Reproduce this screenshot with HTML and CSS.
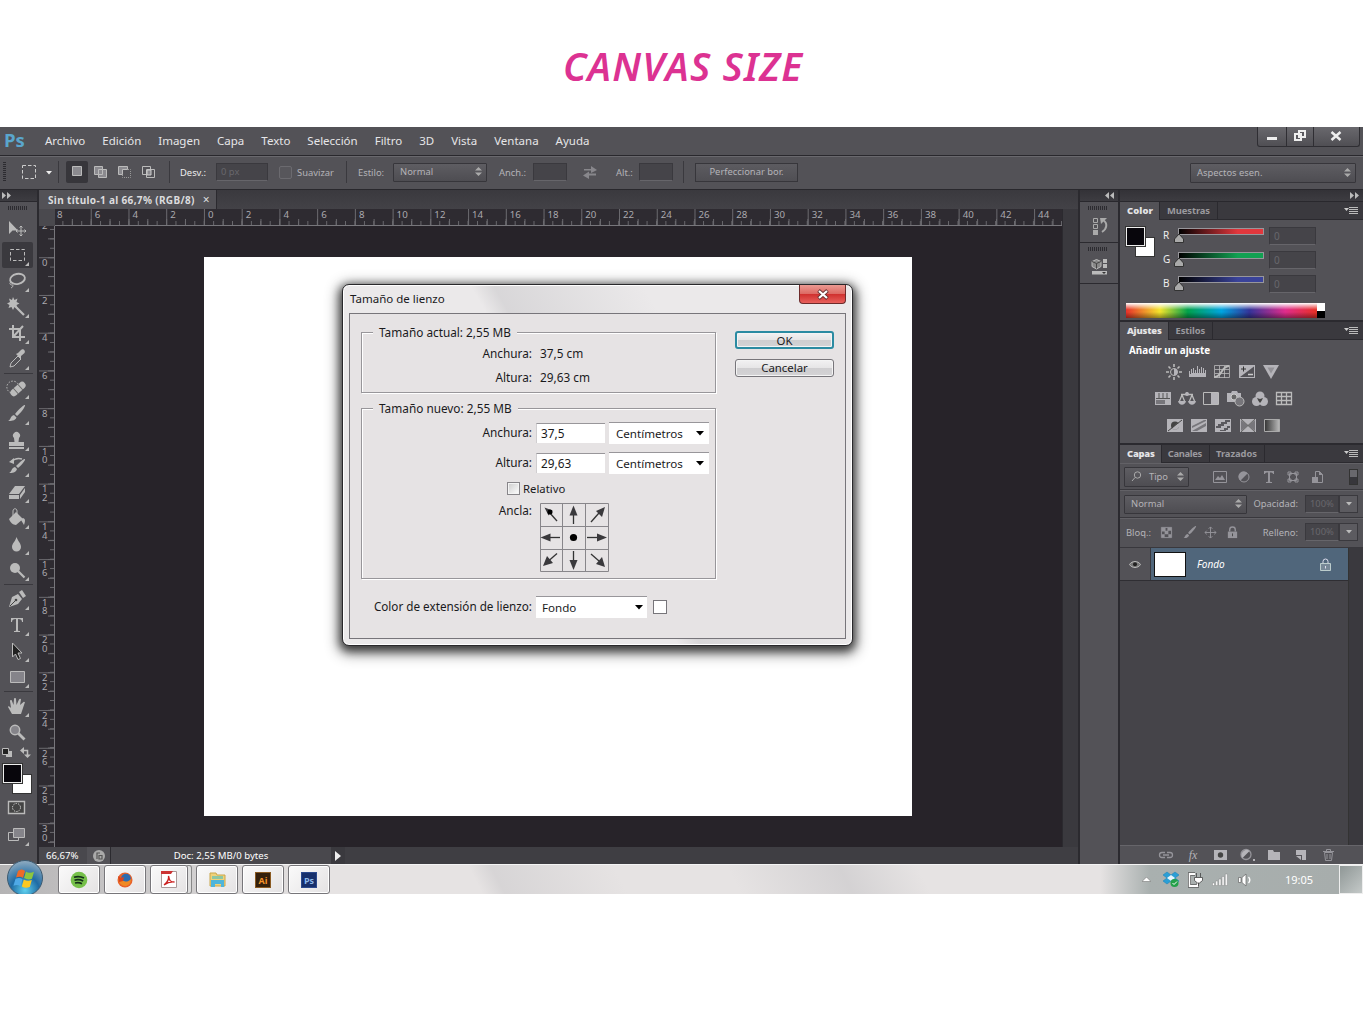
FILE: index.html
```html
<!DOCTYPE html>
<html lang="es">
<head>
<meta charset="utf-8">
<title>Canvas Size</title>
<link rel="stylesheet" href="styles.css">
</head>
<body>
<h1 class="title">CANVAS SIZE</h1>
<div class="app">
  <header class="menubar">
    <span class="logo">Ps</span>
    <nav class="menu"><span>Archivo</span><span>Edición</span><span>Imagen</span><span>Capa</span><span>Texto</span><span>Selección</span><span>Filtro</span><span>3D</span><span>Vista</span><span>Ventana</span><span>Ayuda</span></nav>
    <div class="winbtns">
      <svg width="28" height="19"><path d="M9 10h10v3H9z" fill="#eee"/></svg>
      <svg width="27" height="19"><path d="M12 4h6v6h-6zM8 7h6v6H8z" fill="#5a595e" stroke="#eee" stroke-width="2"/></svg>
      <svg width="46" height="19"><path d="M17.500 5l9 8M26.500 5l-9 8" stroke="#eee" stroke-width="2.500"/></svg>
    </div>
  </header>

  <div class="options">
    <i class="vgrip"></i>
    <svg class="opt-tool" width="34" height="20"><path d="M3.500 3.500h13v13h-13z" fill="none" stroke="#ccc" stroke-dasharray="3.500 2"/><path d="M27 9h6l-3 3.500z" fill="#eee"/></svg>
    <i class="vsep"></i>
    <div class="modes">
      <svg class="on" width="22" height="22"><path d="M6.500 5.500h9v9h-9z" fill="#8b8a8f" stroke="#bbb"/></svg>
      <svg width="22" height="22"><path d="M4.500 5.500h8v3h4v8h-8v-3h-4z" fill="#8b8a8f" stroke="#bbb"/><path d="M8.500 8.500h4v5h-4z" fill="none" stroke="#bbb"/></svg>
      <svg width="22" height="22"><path d="M4.500 5.500h9v3h-5v5h-4z" fill="#8b8a8f" stroke="#bbb"/><path d="M14 8.500h2.500v8h-8V14" fill="none" stroke="#999" stroke-dasharray="1 1"/></svg>
      <svg width="22" height="22"><path d="M4.500 5.500h8v8h-8zM8.500 8.500h8v8h-8z" fill="none" stroke="#bbb"/><path d="M9 9h4v5H9z" fill="#8b8a8f" stroke="#ccc"/></svg>
    </div>
    <i class="vsep"></i>
    <span class="lit desv">Desv.:</span><span class="field w52">0 px</span>
    <i class="check"></i><span class="suav">Suavizar</span>
    <i class="vsep s3"></i>
    <span class="estilo">Estilo:</span>
    <span class="sel w94">Normal<svg width="7" height="9"><path d="M0 3.500L3.500 0 7 3.500zM0 5.500h7L3.500 9z"/></svg></span>
    <span class="anch">Anch.:</span><span class="field w34"></span>
    <svg class="swap" width="16" height="14"><path d="M2 4h7V1l6 4-6 3V5.500H2zM14 8.500H7v-2l-6 4L7 14v-3.500h7z" fill="#88878c"/></svg>
    <span class="alt">Alt.:</span><span class="field w34"></span>
    <i class="vsep s4"></i>
    <span class="btn">Perfeccionar bor.</span>
    <span class="sel workspace-sel">Aspectos esen.<svg width="7" height="9"><path d="M0 3.500L3.500 0 7 3.500zM0 5.500h7L3.500 9z"/></svg></span>
  </div>

  <div class="work">
    <aside class="tools">
      <div class="dockhead left"><svg width="9" height="7"><path d="M0 0l4 3.500L0 7zM5 0l4 3.500L5 7z" fill="#bbb"/></svg></div>
      <i class="hgrip"></i>
      <svg class="t" viewBox="0 0 34 26"><path d="M9 5v13l3.500-3.500H18z"/><path d="M21 10v10M16 15h10M19.500 11.500l1.500-1.500 1.500 1.500M19.500 18.500l1.500 1.500 1.500-1.500M17.500 13.500L16 15l1.500 1.500M24.500 13.500L26 15l-1.500 1.500" class="s"/></svg>
      <svg class="t on" viewBox="0 0 31 26"><path d="M8.500 7.500h14v11h-14z" class="s" stroke-dasharray="3.500 2"/><path d="M23 24h4v-4z"/></svg>
      <svg class="t" viewBox="0 0 34 26"><ellipse cx="17.500" cy="11" rx="7.500" ry="5" class="s" stroke-width="1.800" transform="rotate(-12 17 11)"/><path d="M11 14c-2 1-1 3 1 3s1 2-1 3" class="s"/><path d="M25 24h4v-4z"/></svg>
      <svg class="t" viewBox="0 0 34 26"><path d="M13 3l1.500 3 3-1.500L16.500 8l3 1.500-3 1.500 1 3-3-1-1.500 3-1.500-3-3 1 1-3L7 9.500 10 8 9 4.500 12 6z"/><path d="M15 12l9 9" stroke="#bbb" stroke-width="2.200"/><path d="M25 24h4v-4z"/></svg>
      <svg class="t" viewBox="0 0 34 26"><path d="M9 9h11v12M13 5v12h12M13 17l10-11" class="s" stroke-width="2"/><path d="M25 24h4v-4z"/></svg>
      <svg class="t" viewBox="0 0 34 26"><path d="M10 21l1-4 7-7 3 3-7 7z" class="s"/><path d="M16 8l2-1 3-3c2-2 5 1 3.500 3L21 10v3z"/><path d="M25 24h4v-4z"/></svg>
      <i class="tsep"></i>
      <svg class="t" viewBox="0 0 34 26"><path d="M14 18a6 6 0 1 1 4-9" class="s" stroke-dasharray="1.500 1.500"/><g transform="rotate(-42 18 14)"><rect x="9" y="10.500" width="18" height="7" rx="3.500"/><path d="M15 10v8M21 10v8" stroke="#666"/></g><path d="M25 24h4v-4z"/></svg>
      <svg class="t" viewBox="0 0 34 26"><path d="M25 4c1 1-5 9-8 11l-2-2c2-3 9-10 10-9zM14 14l2.500 2.500C15 20 11 20 8 20c3-1 2-5 6-6z"/><path d="M25 24h4v-4z"/></svg>
      <svg class="t" viewBox="0 0 34 26"><path d="M14 11a3.500 3.500 0 1 1 5 0l-.5 4H24v4H9v-4h5.500zM9 20h15v2H9z"/><path d="M25 24h4v-4z"/></svg>
      <svg class="t" viewBox="0 0 34 26"><path d="M25 6c1 1-5 8-7 9l-2-2c2-2 8-8 9-7zM15 14l2 2c-1 4-5 4-8 4 3-1 2-5 6-6z"/><path d="M11 9c4-4 8-4 11-3" class="s" stroke-width="1.500"/><path d="M9 9l5-4v6zM22 14v1M22 17v1M20 20v1"/><path d="M25 24h4v-4z"/></svg>
      <svg class="t" viewBox="0 0 34 26"><path d="M9 15l6-8h10l-6 8zM9 16h10v4H9zM20 16l5-7v4l-5 7z"/><path d="M25 24h4v-4z"/></svg>
      <svg class="t" viewBox="0 0 34 26"><path d="M9 14l7-7 7 7-7 6c-3 0-6-3-7-6zM23 13c3 1 2 4 1 7l-3-5z"/><path d="M13 12V6c0-3 4-3 4 0v6" class="s"/><path d="M25 24h4v-4z"/></svg>
      <svg class="t" viewBox="0 0 34 26"><path d="M16.500 6c2 5 4.500 6.500 4.500 10a4.500 4.500 0 0 1-9 0C12 12.500 15 11 16.500 6z"/><path d="M25 24h4v-4z"/></svg>
      <svg class="t" viewBox="0 0 34 26"><circle cx="15" cy="11" r="5"/><path d="M18 14l6.500 6.500" stroke="#bbb" stroke-width="2.200"/><path d="M25 24h4v-4z"/></svg>
      <i class="tsep"></i>
      <svg class="t" viewBox="0 0 34 26"><path d="M9 21l3-10 6-3 4 5-4 5zM19 6l3-2 4 6-3 2z"/><path d="M10 20l6-6" stroke="#444" /><circle cx="16" cy="14" r="1.300" fill="#444"/><path d="M25 24h4v-4z"/></svg>
      <svg class="t" viewBox="0 0 34 26"><path d="M11 6h12v4h-1c0-2-1-3-4-3v11c0 1 .5 1 2 1v1h-6v-1c1.500 0 2 0 2-1V7c-3 0-4 1-4 3h-1z"/><path d="M25 24h4v-4z"/></svg>
      <svg class="t" viewBox="0 0 34 26"><path d="M12.500 5v14l3-3 2.500 5.500 2.500-1-2.500-5.500h4z" fill="#222" stroke="#bbb"/><path d="M25 24h4v-4z"/></svg>
      <svg class="t" viewBox="0 0 34 26"><path d="M10.500 7.500h14v11h-14z" fill="#85848a" stroke="#bbb"/><path d="M25 24h4v-4z"/></svg>
      <i class="tsep"></i>
      <svg class="t" viewBox="0 0 34 26"><path d="M12 21l-4-7c0-1 1-1.500 3 1L10 8c0-1.500 2-1.500 2 0l1.500 4L14 6c0-1.500 2-1.500 2 0l.500 6L19 6.500c.500-1 2-1 2 0L20 12l3.500-3c1-.500 2 .500 1 1.500L21 21z"/><path d="M25 24h4v-4z"/></svg>
      <svg class="t" viewBox="0 0 34 26"><circle cx="15" cy="11" r="4.700" fill="#85848a" stroke="#bbb" stroke-width="1.500"/><path d="M18.500 14.500l6 6" stroke="#bbb" stroke-width="2.800"/></svg>
      <svg class="mini" width="34" height="16"><path d="M6 6h6v6H6z" fill="#bbb"/><path d="M2.500 3.500h6v6h-6z" fill="#222" stroke="#bbb"/><path d="M23 5.500h4.500V10" fill="none" stroke="#bbb" stroke-width="1.500"/><path d="M20 5.500L24 2v7zM24 9.500h7L27.500 13z" fill="#bbb"/></svg>
      <div class="swatches big"><b class="bg"></b><b class="fg"></b></div>
      <svg class="t qm" viewBox="0 0 34 26"><path d="M8.500 7.500h16v12h-16z" fill="#444" stroke="#bbb" stroke-width="1.400"/><circle cx="16.500" cy="13.500" r="4" fill="none" stroke="#ddd" stroke-dasharray="1.300 1.200"/></svg>
      <svg class="t" viewBox="0 0 34 26"><path d="M8.500 10.500h10v8h-10z" class="s"/><path d="M13.500 6.500h11v9h-11z" fill="#85848a" stroke="#bbb"/><path d="M25 24h4v-4z"/></svg>
    </aside>

    <main class="doc">
      <div class="tabs"><span class="tab">Sin título-1 al 66,7% (RGB/8)<em>×</em></span></div>
      <div class="doc-grid">
        <i class="corner"></i>
        <div class="hruler"><span>8</span><span>6</span><span>4</span><span>2</span><span>0</span><span>2</span><span>4</span><span>6</span><span>8</span><span>10</span><span>12</span><span>14</span><span>16</span><span>18</span><span>20</span><span>22</span><span>24</span><span>26</span><span>28</span><span>30</span><span>32</span><span>34</span><span>36</span><span>38</span><span>40</span><span>42</span><span>44</span></div>
        <i class="vscroll"></i>
        <div class="vruler"><span>2</span><span>0</span><span>2</span><span>4</span><span>6</span><span>8</span><span>10</span><span>12</span><span>14</span><span>16</span><span>18</span><span>20</span><span>22</span><span>24</span><span>26</span><span>28</span><span>30</span></div>
        <div class="stage"><div class="paper"></div></div>
      </div>
      <footer class="status"><span class="zoom">66,67%</span><span class="expo"><svg width="14" height="14"><circle cx="7" cy="7" r="6" fill="#aaa"/><path d="M5 10V4h3M7 10V6.500h3V10z" fill="none" stroke="#555" stroke-width="1.200"/></svg></span><span class="docinfo">Doc: 2,55 MB/0 bytes</span><span class="play"><svg width="7" height="10"><path d="M0 0l6 5-6 5z" fill="#eee"/></svg></span><i class="hscroll"></i></footer>
    </main>

    <aside class="strip">
      <div class="dockhead right"><svg width="9" height="7"><path d="M4 0L0 3.500 4 7zM9 0L5 3.500 9 7z" fill="#bbb"/></svg></div>
      <div class="slot"><i class="hgrip"></i><svg width="18" height="20"><path d="M2.500 1.500h4v4h-4zM2.500 7.500h4v4h-4z" fill="none" stroke="#aaa"/><path d="M2 13h5v5H2z" fill="#aaa"/><path d="M12 3c5 3 4 9-1 12" fill="none" stroke="#aaa" stroke-width="2"/><path d="M9 1h7l-6 6z" fill="#aaa"/></svg></div>
      <div class="slot"><i class="hgrip"></i><svg width="18" height="20"><path d="M5.500 1.500l4.500 2v5L5.500 11 1 8.500v-5z" fill="#888" stroke="#bbb"/><path d="M1 3.500l4.500 2 4.500-2M5.500 5.500v5" fill="none" stroke="#444"/><path d="M12 1h4v4h-4zM12 6h4v4h-4zM1 13h15v3.500H1z" fill="#bbb"/><path d="M11 14h4l-2 2z" fill="#333"/></svg></div>
    </aside>

    <aside class="panels">
      <div class="dockhead right"><svg width="9" height="7"><path d="M0 0l4 3.500L0 7zM5 0l4 3.500L5 7z" fill="#bbb"/></svg></div>
      <section class="panel color">
        <div class="ptabs"><b>Color</b><span>Muestras</span><svg class="pm" width="15" height="9"><path d="M0 2h5L2.500 5z" fill="#ccc"/><path d="M5 1.500h9M5 3.500h9M5 5.500h9M5 7.500h9" stroke="#bbb"/></svg></div>
        <div class="colorbody">
          <div class="swatches"><b class="bg"></b><b class="fg"></b></div>
          <div class="sliders">
            <div class="srow"><label>R</label><span class="track r"><svg width="10" height="9"><path d="M5 0l4.500 5v3.500h-9V5z"/></svg></span><span class="field">0</span></div>
            <div class="srow"><label>G</label><span class="track g"><svg width="10" height="9"><path d="M5 0l4.500 5v3.500h-9V5z"/></svg></span><span class="field">0</span></div>
            <div class="srow"><label>B</label><span class="track b"><svg width="10" height="9"><path d="M5 0l4.500 5v3.500h-9V5z"/></svg></span><span class="field">0</span></div>
          </div>
        </div>
        <div class="spectrum"><i></i></div>
      </section>
      <section class="panel adjust">
        <div class="ptabs"><b>Ajustes</b><span>Estilos</span><svg class="pm" width="15" height="9"><path d="M0 2h5L2.500 5z" fill="#ccc"/><path d="M5 1.500h9M5 3.500h9M5 5.500h9M5 7.500h9" stroke="#bbb"/></svg></div>
        <p>Añadir un ajuste</p>
        <div class="irow r1">
          <svg viewBox="0 0 18 16"><circle cx="9" cy="8" r="3.500" class="s"/><path d="M9 4.500a3.500 3.500 0 0 1 0 7z"/><path d="M9 0v3M9 13v3M1 8h3M14 8h3M3.500 2.500l2 2M14.500 2.500l-2 2M3.500 13.500l2-2M14.500 13.500l-2-2" class="s" stroke-width="1.600"/></svg>
          <svg viewBox="0 0 18 16"><path d="M0 13V7h1v3h1V5h1v4h1V4h1v5h1V6h1v3h1V2h1v7h1V5h1v4h1V3h1v6h1V4h1v5h1V6h1v7z"/></svg>
          <svg viewBox="0 0 18 16"><path d="M1.500 1.500h15v12h-15zM6.500 2v12M11.500 2v12M2 5.500h14M2 9.500h14" class="s" stroke-width=".8"/><path d="M1 13c9 0 6-10 15-11" class="s" stroke-width="2"/></svg>
          <svg viewBox="0 0 18 16"><path d="M1 1h16v13H1z"/><path d="M2 13L16 2.500V13z" fill="#535257"/><path d="M3 5h5M5.500 2.500v5" stroke="#333"/><path d="M10 10.500h5" stroke="#ccc" stroke-width="1.500"/></svg>
          <svg viewBox="0 0 18 16"><path d="M1 1h16L9 15z"/><path d="M5.500 3.500h7l-3.500 6z" fill="#939297"/></svg>
        </div>
        <div class="irow r2">
          <svg viewBox="0 0 18 16"><path d="M1 1h16v13H1z"/><path d="M5 2v5M9 2v5M13 2v5M2 7.500h14" stroke="#555"/><path d="M2 9h9v4H2z" fill="#77767b"/></svg>
          <svg viewBox="0 0 18 16"><path d="M9 1v3M3 3.500h12M4 4L1.500 10M4 4l2.500 6M14 4l-2.500 6M14 4l2.500 6" class="s" stroke-width="1.300"/><circle cx="9" cy="3" r="2"/><path d="M0 10h8c-1 5-7 5-8 0zM10 10h8c-1 5-7 5-8 0z"/></svg>
          <svg viewBox="0 0 18 16"><path d="M1.500 1.500h15v12h-15z" class="s"/><path d="M9 2h7v11H9z"/></svg>
          <svg viewBox="0 0 18 16"><path d="M0 2h4l1-2h5l1 2h3v9H0z"/><circle cx="7" cy="6" r="3" fill="#666" stroke="#ccc"/><circle cx="12.500" cy="10.500" r="4.500" fill="#77767b" stroke="#bbb"/></svg>
          <svg viewBox="0 0 18 16"><circle cx="9" cy="5" r="4.500"/><circle cx="5.500" cy="10.500" r="4.500"/><circle cx="12.500" cy="10.500" r="4.500"/><path d="M6 7l3 1 3-1-1.500 3L9 12l-1.500-2z" fill="#444"/></svg>
          <svg viewBox="0 0 18 16"><path d="M1.500 1.500h15v12h-15zM6.500 1v13M11.500 1v13M1 5.500h16M1 9.500h16" class="s" stroke-width="1.300"/></svg>
        </div>
        <div class="irow r3">
          <svg viewBox="0 0 18 16"><path d="M1 2h16v13H1z"/><circle cx="9" cy="8.500" r="4" fill="#444"/><path d="M12 5.500a4 4 0 0 1-6 6z"/><path d="M2 14L16 3" stroke="#444"/></svg>
          <svg viewBox="0 0 18 16"><path d="M1 2h16v13H1z"/><path d="M2 9l12-6h2v1L2 11zM2 14l14-8v3L7 14z" fill="#77767b"/></svg>
          <svg viewBox="0 0 18 16"><path d="M1 2h16v13H1z"/><path d="M2 9h2V7h3V5h4V3h5v2h-3v2h-3v2H7v2H2zM6 14v-1h4v-2h3V9h3v2h-2v2h-2v1z" fill="#5a595e"/></svg>
          <svg viewBox="0 0 18 16"><path d="M1 2h16v13H1z"/><path d="M2 3l7 5.500L2 14zM16 3L9 8.500 16 14z" fill="#77767b"/><path d="M2 2l14 13M16 2L2 15" stroke="#666"/></svg>
          <svg viewBox="0 0 18 16"><defs><linearGradient id="gm"><stop stop-color="#333"/><stop offset="1" stop-color="#bbb"/></linearGradient></defs><path d="M1.500 2.500h15v12h-15z" fill="url(#gm)" stroke="#aaa"/></svg>
        </div>
      </section>
      <section class="panel layers">
        <div class="ptabs"><b>Capas</b><span>Canales</span><span>Trazados</span><svg class="pm" width="15" height="9"><path d="M0 2h5L2.500 5z" fill="#ccc"/><path d="M5 1.500h9M5 3.500h9M5 5.500h9M5 7.500h9" stroke="#bbb"/></svg></div>
        <div class="lrow l1">
          <span class="sel tipo"><svg class="mag" width="11" height="11"><circle cx="6.500" cy="4" r="3.200" fill="none" stroke="#aaa"/><path d="M4 6.500L1 10" stroke="#aaa"/></svg>Tipo<svg width="7" height="9"><path d="M0 3.500L3.500 0 7 3.500zM0 5.500h7L3.500 9z"/></svg></span>
          <svg class="flt f1" viewBox="0 0 14 12"><path d="M.500 .500h13v11H.500z" class="s"/><path d="M2 9l3-4 2 2 2-3 3 5z"/></svg>
          <svg class="flt" viewBox="0 0 14 12"><circle cx="7" cy="6" r="5" class="s"/><path d="M10.500 2.500A5 5 0 1 0 3.500 9.500z"/></svg>
          <svg class="flt" viewBox="0 0 14 12"><path d="M2 0h10v3h-1c0-1-1-1.500-3-1.500V10c0 1 .5 1 2 1v1H4v-1c1.500 0 2 0 2-1V1.500C4 1.500 3 2 3 3H2z"/></svg>
          <svg class="flt" viewBox="0 0 14 12"><path d="M3.500 2.500h7v7h-7z" class="s"/><path d="M2 1h3v3H2zM9 1h3v3H9zM2 8h3v3H2zM9 8h3v3H9z" class="s"/></svg>
          <svg class="flt" viewBox="0 0 14 12"><path d="M5.500 .500h4l3 3v8h-7z" class="s"/><path d="M9 0v4h4M2 6h6v6H2z"/></svg>
          <i class="toggle"></i>
        </div>
        <div class="lrow l2"><span class="sel mode">Normal<svg width="7" height="9"><path d="M0 3.500L3.500 0 7 3.500zM0 5.500h7L3.500 9z"/></svg></span><span class="lbl">Opacidad:</span><span class="field">100%</span><span class="drop"><svg width="6" height="4"><path d="M0 0h6L3 3.500z" fill="#bbb"/></svg></span></div>
        <div class="lrow l3"><span>Bloq.:</span>
          <svg class="k k1" viewBox="0 0 14 14"><path d="M1.500 1.500h11v11h-11z" class="s"/><path d="M2 2h4v4H2zM8 2h4v3H8zM5 5h4v4H5zM2 9h3v3H2zM9 9h3v3H9z"/></svg>
          <svg class="k k2" viewBox="0 0 14 14"><path d="M14 0c1 1-5 8-7 9L5.500 7.500C7 5 13-.500 14 0zM5 8.500L6.500 10c-1 3-3 3-6 3 2-1 1.500-4 4.500-4.500z"/></svg>
          <svg class="k k3" viewBox="0 0 14 14"><path d="M7 1v12M1 7h12M5 3l2-2 2 2M5 11l2 2 2-2M3 5L1 7l2 2M11 5l2 2-2 2" class="s"/></svg>
          <svg class="k k4" viewBox="0 0 14 14"><path d="M2 6h10v7H2z"/><path d="M4 6V4a3 3 0 0 1 6 0v2" class="s" stroke-width="1.500"/><path d="M7 8v3" stroke="#444"/></svg>
          <span class="lbl">Relleno:</span><span class="field">100%</span><span class="drop"><svg width="6" height="4"><path d="M0 0h6L3 3.500z" fill="#bbb"/></svg></span></div>
        <div class="layerlist">
          <div class="layer"><span class="eye"><svg width="12" height="9"><path d="M.500 4.500C3 .500 9 .500 11.500 4.500 9 8.500 3 8.500 .500 4.500z" fill="#777" stroke="#bbb"/><circle cx="6" cy="4.200" r="2" fill="#222"/></svg></span><span class="lay"><i class="thumb"></i><em>Fondo</em><svg width="11" height="13"><path d="M.500 5.500h10v7H.500z" fill="#778897" stroke="#bcc"/><path d="M3 5V3.500a2.500 2.500 0 0 1 5 0V5M5.500 8v2.500" fill="none" stroke="#dde"/></svg></span></div>
          <i class="lscroll"></i>
        </div>
        <div class="lfoot">
          <svg viewBox="0 0 16 14" class="dim"><path d="M7 4.500H4a2.500 2.500 0 0 0 0 5h3M9 4.500h3a2.500 2.500 0 0 1 0 5H9M5 7h6" class="s" stroke-width="1.300"/></svg>
          <span class="fx">fx</span>
          <svg viewBox="0 0 16 14"><path d="M2 2h13v10H2z"/><circle cx="8.500" cy="7" r="2.700" fill="#444"/></svg>
          <svg viewBox="0 0 16 14"><circle cx="7" cy="6.500" r="5" class="s" stroke-width="1.300"/><path d="M10.500 3A5 5 0 0 0 3.500 10zM14 11h2v2h-2z"/></svg>
          <svg viewBox="0 0 16 14"><path d="M2 2h5l1 2h6v8H2z"/></svg>
          <svg viewBox="0 0 16 14"><path d="M3 2h10v10H9V7H3z"/><path d="M3 8h5v4z"/></svg>
          <svg viewBox="0 0 16 14" class="dim"><path d="M4.500 4.500h8l-1 8h-6zM3 3.500h11M6.500 3V1.500h4V3M7 6v5M10 6v5" class="s"/></svg>
        </div>
      </section>
    </aside>
  </div>

  <footer class="taskbar">
    <span class="start"><svg width="38" height="34"><defs><radialGradient id="orb" cx=".5" cy=".85" r=".9"><stop stop-color="#5fd0ee"/><stop offset=".45" stop-color="#1f6ba4"/><stop offset="1" stop-color="#9fb4c4"/></radialGradient></defs><circle cx="19" cy="18" r="17.500" fill="url(#orb)" stroke="#3c5a70"/><path d="M12 11c3-2 5-2 7 0l-2 7c-2-1.500-4-1.500-7-.5z" fill="#ee6a28"/><path d="M20 11.500c2 1.500 5 1.500 8 .3l-2 7c-3 1-5 .7-8-.7z" fill="#8dc63f"/><path d="M9.500 18.800c3-1.200 5-1 7 .5l-2 7c-2-1.500-4.500-1.500-7-.5z" fill="#4fa9e6"/><path d="M17.800 19.600c2.500 1.400 5 1.500 8 .5l-2 7c-3 1.200-5.500.9-8-.6z" fill="#fcc822"/></svg></span>
    <span class="task"><svg width="18" height="18"><circle cx="9" cy="9" r="8.300" fill="#76c04a"/><path d="M4 6.200c4-1.200 7-.7 10 .8M4.500 9.200c3-1 6-.6 8.700.8M5 12c3-.7 5-.4 7 .7" fill="none" stroke="#15301a" stroke-width="1.700"/></svg></span>
    <span class="task"><svg width="16" height="16"><circle cx="8" cy="8" r="7.500" fill="#e8622a"/><circle cx="9" cy="6.500" r="4.800" fill="#2d6cb0"/><path d="M1 5c1 4 4 3 6 4s4 1 7-2c0 5-3 7-6 7S1 11 1 5z" fill="#f08a24"/><path d="M1 4l3 2 3-1-1 4-4 1z" fill="#d8431f"/></svg></span>
    <span class="task n"><svg width="16" height="17"><path d="M.500 .500h15v16H.500z" fill="#fff" stroke="#a99"/><path d="M0 0h12l-2 3H0z" fill="#c33"/><path d="M3 14c4-3 5-6 4.500-9 1 5 2 6 6 6-4-.5-7 .5-10.500 3z" fill="none" stroke="#c22" stroke-width="1.300"/></svg></span>
    <span class="task"><svg width="17" height="17"><path d="M1 2h6l1 2h8v11H1z" fill="#efd27a" stroke="#c9a64a"/><path d="M3 5h11v3H3z" fill="#8cc7a4"/><path d="M2 9h13v7h-3v-3H6v3H2z" fill="#4fb5da"/></svg></span>
    <span class="task"><span class="ai">Ai</span></span>
    <span class="task"><span class="ps">Ps</span></span>
    <span class="tray">
      <svg width="9" height="5"><path d="M0 4.500L4.500 0 9 4.500z" fill="#fff" stroke="#777" stroke-width=".6"/></svg>
      <svg class="y1" width="18" height="17"><path d="M5 1l4 3 4-3 4 3-4 3 4 3-4 3-4-3-4 3-4-3 4-3-4-3z" fill="#2a9fd6" stroke="#2485b8" stroke-width=".6"/><path d="M5 7l4-3 4 3-4 3z" fill="#e8f5fb"/><circle cx="12.500" cy="12" r="4" fill="#25a04a"/><path d="M10.500 12l1.500 1.500 3-3" stroke="#fff" fill="none"/></svg>
      <svg class="y2" width="15" height="16"><path d="M7 2H1.500v12h8v-3" fill="none" stroke="#333" stroke-width="3"/><path d="M7 2H1.500v12h8v-3" fill="none" stroke="#fff" stroke-width="1.800"/><path d="M8.500 1v4M12.500 1v4M6.500 5.500h8v3l-3 2.500h-2l-3-2.500zM10.500 11v3" fill="#fff" stroke="#444" stroke-width=".8"/></svg>
      <svg class="y3" width="16" height="13"><path d="M.500 10h2v2.500h-2zM3.700 8h2v4.500h-2zM6.900 6h2v6.500h-2zM10.100 3.500h2v9h-2zM13.300 1h2v11.500h-2z" fill="#fff" stroke="#777" stroke-width=".4"/></svg>
      <svg class="y4" width="14" height="14"><path d="M.500 4.500H3v5H.500zM4 4.500L8 1v12L4 9.500z" fill="#fff" stroke="#666" stroke-width=".7"/><path d="M10.500 4c1.800 2 1.800 4 0 6" fill="none" stroke="#fff" stroke-width="1.300"/></svg>
      <time>19:05</time>
    </span>
    <i class="peek"></i>
  </footer>

  <div class="dialog">
    <div class="dtitle"><span>Tamaño de lienzo</span><span class="close"><svg width="12" height="11"><path d="M1.500 1.500l9 8M10.500 1.500l-9 8" stroke="#633" stroke-width="3.800"/><path d="M2 2l8 7M10 2L2 9" stroke="#fff" stroke-width="2.200"/></svg></span></div>
    <div class="dbody">
      <div class="dleft">
        <fieldset class="g1"><legend>Tamaño actual: 2,55 MB</legend>
          <div class="drow"><label>Anchura:</label><span>37,5 cm</span></div>
          <div class="drow"><label>Altura:</label><span>29,63 cm</span></div>
        </fieldset>
        <fieldset class="g2"><legend>Tamaño nuevo: 2,55 MB</legend>
          <div class="drow edit"><label>Anchura:</label><span class="inp">37,5</span><span class="combo">Centímetros<svg width="8" height="5"><path d="M0 0h8L4 4.500z"/></svg></span></div>
          <div class="drow edit"><label>Altura:</label><span class="inp">29,63</span><span class="combo">Centímetros<svg width="8" height="5"><path d="M0 0h8L4 4.500z"/></svg></span></div>
          <div class="rel"><i></i>Relativo</div>
          <div class="drow anc"><label>Ancla:</label>
            <svg width="69" height="69" viewBox="0 0 69 69"><path d="M.500 .500h68v68H.500zM22.500 0v69M45.500 0v69M0 23.500h69M0 46.500h69" fill="none" stroke="#88868a"/>
            <g stroke="#333" stroke-width="1.300" fill="#3a393c"><path d="M17 18L9 9" /><path d="M4.500 4.500l8 3-4 5z" stroke="none"/><circle cx="10" cy="9" r="2.500" fill="#000" stroke="none"/><path d="M33.500 21V8"/><path d="M33.500 2.500l4 10h-8z" stroke="none"/><path d="M51 19l8-9"/><path d="M65 4l-3 10-6-6z" stroke="none"/><path d="M20 34.500H8"/><path d="M.500 34.500l10-4v8z" stroke="none"/><path d="M47 34.500h12"/><path d="M67 34.500l-10-4v8z" stroke="none"/><path d="M17 50.500l-8 7"/><path d="M3 63l4-10 6 7z" stroke="none"/><path d="M33.500 48v12"/><path d="M33.500 67l4-10h-8z" stroke="none"/><path d="M51 51l8 7"/><path d="M65 64l-9-3 6-7z" stroke="none"/></g><circle cx="33.500" cy="34.500" r="3.600"/></svg></div>
        </fieldset>
        <div class="drow ext"><label>Color de extensión de lienzo:</label><span class="combo wide">Fondo<svg width="8" height="5"><path d="M0 0h8L4 4.500z"/></svg></span><i class="chip"></i></div>
      </div>
      <div class="dbtns"><span class="ok">OK</span><span>Cancelar</span></div>
    </div>
  </div>
</div>
</body>
</html>
```
FILE: styles.css
```css
*{box-sizing:border-box}
body{margin:0;width:1370px;height:1028px;background:#fff;overflow:hidden;font-family:"Noto Sans","Open Sans",sans-serif;white-space:nowrap}
svg{display:block;flex:none}
i{display:block;flex:none;font-style:normal}
.title{margin:0;height:127px;padding:39px 0 0 563px;font:italic 600 39px/54px "Noto Sans",sans-serif;color:#dc3292;letter-spacing:1.100px}
.app{position:relative;width:1363px;height:767px;background:#535257;color:#b4b3b8;font-size:9.4px;display:flex;flex-direction:column}

.menubar{height:29px;display:flex;align-items:flex-start;border-bottom:1px solid #29282d}
.logo{width:45px;padding-left:4px;font:700 18.500px/26px "Open Sans",sans-serif;color:#5aa6cd}
.menu{display:flex;gap:17px;font-size:11.500px;line-height:27px;color:#e6e6e8}
.winbtns{margin-left:auto;margin-right:3px;display:flex;border:1px solid #2f2e33;border-top:0;border-radius:0 0 3px 3px;background:linear-gradient(#69686d,#504f54)}
.winbtns svg+svg{border-left:1px solid #2f2e33}

.options{height:34px;display:flex;align-items:center;padding-bottom:2px;border-top:1px solid #69686d;border-bottom:1px solid #29282d}
.options span{flex:none}
.vgrip{width:3px;height:20px;margin-left:3px;background:repeating-linear-gradient(#2c2b30 0 1px,transparent 1px 2px)}
.opt-tool{margin-left:13px;width:38px}
.vsep{width:1px;height:22px;background:#3a393e;margin-left:1px}
.modes{display:flex;gap:2px;margin:0 8px 0 7px}
.modes .on{background:#37363b;border-radius:2px}
.lit{color:#eee}
.desv{margin-left:10px;width:36px}
.field{display:block;height:18px;line-height:16px;background:#454449;border:1px solid #3a393e;border-bottom-color:#66656a;color:#68676c;padding-left:4px}
.w52{width:52px}.w34{width:34px}
.check{width:13px;height:13px;margin-left:11px;border:1px solid #6b6a6f;border-radius:2px;background:#57565b}
.suav{margin-left:5px;width:49px}
.s3{margin-left:0}
.estilo{margin-left:11px;width:35px}
.sel{display:flex;align-items:center;justify-content:space-between;height:19px;padding:0 4px 1px 6px;border:1px solid #37363b;background:linear-gradient(#5e5d62,#4e4d52);border-radius:1px}
.sel svg{fill:#aaa}
.w94{width:94px}
.anch{margin-left:12px;width:34px}
.swap{margin-left:15px}
.alt{margin-left:18px;width:23px}
.s4{margin-left:10px}
.btn{margin-left:11px;width:103px;height:19px;border:1px solid #37363b;text-align:center;line-height:16px;background:linear-gradient(#5c5b60,#504f54)}
.workspace-sel{width:166px;height:20px;margin:2px 7px 0 auto}

.work{height:674px;display:flex;background:#2b2a2f}
.dockhead{height:12px;background:linear-gradient(#333237,#3d3c41);border-bottom:1px solid #29282d;display:flex;align-items:center;padding:0 4px 0 2px;flex:none}
.dockhead.right{justify-content:flex-end}
.tools{width:37px;background:#535257;margin-right:2px;display:flex;flex-direction:column;fill:#bbb}
.hgrip{width:20px;height:4px;margin:4px 0 6px 8px;background:repeating-linear-gradient(90deg,#2c2b30 0 1px,transparent 1px 2px)}
.t{width:34px;height:26px}
.t.on{width:31px;margin-left:2px;margin-right:1px;background:#3a393e;border-radius:2px}
.s{fill:none;stroke:#bbb}
.tsep{height:1px;margin:1px 4px;background:#3a393e}
.swatches{position:relative;width:32px;height:32px}
.swatches b{position:absolute;width:19px;height:19px;border:1px solid #333}
.swatches .bg{left:9px;top:10px;background:#fff;width:20px;height:20px}
.swatches .fg{left:0;top:0;background:#08060c;border:1px solid #eee;outline:1px solid #333}
.swatches.big{margin:3px 0 0 3px}
.qm{margin-top:-2px;margin-bottom:2px}

.doc{width:1039px;display:flex;flex-direction:column;margin-right:2px}
.tabs{height:19px;background:linear-gradient(#3a393e,#434247);display:flex}
.tab{width:178px;padding-left:9px;background:#535257;color:#dcdcde;font-size:10px;font-weight:700;line-height:19px;border-right:1px solid #2b2a2f;letter-spacing:.34px}
.tab em{font-style:normal;font-size:12px;margin-left:8px;font-weight:400}
.doc-grid{height:638px;display:grid;grid-template:17px 621px/16px 1007px 16px;background:#272329}
.corner{background:#4a494e}
.hruler{background-color:#2e2b31;border-bottom:1px solid #77767b;display:flex;background-image:linear-gradient(90deg,#6b6a6f 1px,transparent 1px),linear-gradient(90deg,#6b6a6f 1px,transparent 1px),linear-gradient(90deg,#6b6a6f 1px,transparent 1px);background-size:37.740px 16px,18.870px 6px,9.435px 4px;background-position:-2px 0,-2px 10px,-2px 12px;background-repeat:repeat-x}
.hruler span{flex:0 0 37.740px;padding-left:2px;line-height:12px;color:#aaa9ae;font-size:9.700px}
.hruler span:last-child{flex-basis:25px}
.vscroll{grid-column:3;grid-row:1/3;background:#3a393e;border-left:1px solid #2b2a2f}
.vruler{background-color:#2e2b31;border-right:1px solid #77767b;background-image:linear-gradient(#6b6a6f 1px,transparent 1px),linear-gradient(#6b6a6f 1px,transparent 1px),linear-gradient(#6b6a6f 1px,transparent 1px);background-size:15px 37.740px,6px 18.870px,4px 9.435px;background-position:0 -6.500px,9px -6.500px,11px -6.500px;background-repeat:repeat-y}
.vruler span{display:block;width:7px;height:37.740px;margin-left:3px;padding-top:2px;white-space:normal;word-break:break-all;line-height:8.500px;color:#aaa9ae;font-size:9.500px}
.vruler span:first-child{height:31px;padding:0;line-height:0;overflow:hidden}
.vruler span:last-child{height:22px}
.stage{padding:31px 0 0 149px}
.paper{width:708px;height:559px;background:#fff}
.status{height:17px;background:#49484d;display:flex;align-items:center;color:#fff;font-size:9.600px}
.zoom{width:48px;padding-left:7px}
.expo{width:24px;height:17px;padding:2px 0 0 5px;background:#535257;border-right:1px solid #2b2a2f}
.docinfo{width:220px;text-align:center}
.play{width:14px;height:17px;padding:4px 0 0 4px;background:#3a393e}
.hscroll{flex:1;height:17px;background:#3f3e43}

.strip{width:38px;margin-right:2px;background:#535257}
.strip .hgrip{margin:0 0 7px 8px}
.slot{height:41px;padding-top:4px;border-bottom:1px solid #2b2a2f}
.slot svg{margin-left:11px}

.panels{width:243px;display:flex;flex-direction:column;background:#2b2a2f}
.panel{background:#535257;margin-bottom:2px}
.ptabs{height:18px;display:flex;align-items:stretch;background:#3a393e;line-height:17px;font-weight:700;font-size:9.400px;letter-spacing:-.08px;color:#9a999e;border-bottom:1px solid #2b2a2f}
.ptabs b{background:#535257;color:#e4e4e6;padding:0 6px 0 7px;height:18px;letter-spacing:-.2px}
.ptabs span{padding:0 7px;border-left:1px solid #2b2a2f}
.ptabs span:last-of-type{border-right:1px solid #2b2a2f}
.pm{margin:4px 4px 0 auto}
.color{height:118px}
.color .ptabs b{letter-spacing:.1px}
.colorbody{display:flex;height:84px;padding:7px 0 0 6px}
.sliders{display:flex;flex-direction:column;gap:6px;margin-left:5px}
.srow{display:flex;height:18px;color:#eee;font-size:10px}
.srow label{width:15px;line-height:17px}
.track{width:86px;height:7px;margin:1px 5px 0 0;border:1px solid #97969b}
.track svg{fill:#aaa;stroke:#333;margin:5px 0 0 -5px}
.track.r{background:linear-gradient(90deg,#000,#e2373d 70%)}
.track.g{background:linear-gradient(90deg,#000,#12a152 70%)}
.track.b{background:linear-gradient(90deg,#000,#3a439a 70%)}
.srow .field{width:47px}
.spectrum{width:199px;height:15px;margin:-1px 0 0 6px;display:flex;justify-content:flex-end;background:linear-gradient(#fff,transparent 45%,transparent 60%,rgba(0,0,0,.4)),linear-gradient(90deg,#e8302a,#f4e52c 17%,#00a14b 31%,#00a5e0 48%,#343399 62%,#e02c8c 80%,#e8302a 95%)}
.spectrum i{width:8px;background:linear-gradient(#fff 50%,#000 50%)}
.adjust{height:121px;fill:#b5b4b9}
.adjust p{margin:2px 0 0 9px;font-size:9.900px;line-height:16px;font-weight:700;color:#fff}
.irow{display:flex;gap:6.200px;height:27px}
.irow svg{width:18px;height:16px}
.r1{padding:6px 0 0 45px}.r2{padding:6px 0 0 34px}.r3{padding:5px 0 0 46px}
.layers{flex:1;margin:0;display:flex;flex-direction:column;fill:#95949a}
.layers .ptabs{flex:none}
.layers .ptabs span{padding:0 7px 0 6px;letter-spacing:-.3px}
.layers .ptabs span:last-of-type{letter-spacing:-.05px}
.lrow{height:28px;display:flex;align-items:center;padding:0 5px 0 4px;border-bottom:1px solid #39383d;border-top:1px solid #626166;flex:none}
.l1{height:27px}
.tipo{width:65px;height:20px}.tipo .mag{margin-right:-2px}
.flt{width:14px;height:12px;margin-right:10.300px}
.lrow .s,.lfoot .s{stroke:#95949a}
.f1{margin-left:24px}
.toggle{width:9px;height:16px;margin-left:auto;background:linear-gradient(#69686d 50%,#37363b 50%);border:1px solid #333}
.mode{width:123px}
.lbl{margin-left:auto;margin-right:7px}
.l2 .lbl{padding-bottom:2px}
.l2 .field,.l3 .field{width:34px}
.drop{width:19px;height:18px;display:flex;align-items:center;justify-content:center;background:#5c5b60;border:1px solid #3a393e}
.l3{height:30px;padding-left:6px;padding-bottom:2px}
.k{width:13px;height:13px}
.k1{margin-left:9px}.k2{margin-left:9px;width:15px}.k3{margin-left:7px}.k4{margin-left:9px}
.layerlist{flex:1;display:flex;background:#454449;align-items:stretch}
.layer{width:228px;height:33px;display:flex;border-bottom:1px solid #2f2e33}
.eye{width:31px;padding:12px 0 0 9px;background:#535257;border-right:1px solid #39383d}
.lay{flex:1;display:flex;align-items:center;background:#50667b;padding:0 17px 0 3px;color:#fff}
.lay em{margin-left:11px;flex:1;font-size:10px}
.thumb{width:32px;height:25px;background:#fff;border:1px solid #111}
.lscroll{width:15px;background:#3a393e;border-left:1px solid #333}
.lfoot{height:19px;flex:none;display:flex;align-items:center;border-top:1px solid #66656a;padding-left:38px;gap:11px;fill:#b5b4b9}
.lfoot svg{width:16px;height:14px}
.fx{width:16px;font:italic 12px "Liberation Serif",serif;text-align:center}

.taskbar{position:relative;height:30px;display:flex;align-items:flex-start;gap:4px;border-top:1px solid #f4f4f4;background:linear-gradient(63deg,transparent 0 430px,rgba(170,170,175,.25) 450px,transparent 560px,transparent 660px,rgba(170,170,175,.3) 760px,transparent 830px),linear-gradient(90deg,#b4b3b4 0,#bdbcbd 56px,#e6e3e3 330px,#e6e3e3 1100px,#a9b0af 1150px,#a7adac 1338px,#a7adac)}
.start{width:54px;height:29px;overflow:visible}
.start svg{position:relative;left:6px;top:-5px;height:34px}
.task{width:42px;height:29px;display:flex;align-items:center;justify-content:center;border:1px solid #77767a;border-radius:3px;background:linear-gradient(135deg,#fafafa,#e4e2e3);box-shadow:inset 0 0 0 1px #fff}
.task.n{width:38px;margin-right:4px;box-shadow:inset 0 0 0 1px #fff,4px 0 0 -1px #ddd,4px 0 0 #888}
.ai,.ps{width:16px;height:16px;font:700 9px/15px "Open Sans",sans-serif;text-align:center;background:#35200c;color:#f6942a;border:1px solid #8a5a22}
.ps{background:#17306c;color:#8cb8ea;border-color:#2c4a8e}
.tray{margin-left:auto;display:flex;align-items:center;height:29px;color:#fff;font-size:11px}
.y1{margin-left:11px}.y2{margin-left:8px}.y3{margin-left:9px}.y4{margin-left:10px}
.tray time{margin:0 22px 0 33px}
.peek{width:24px;height:29px;border:1px solid #eee;background:linear-gradient(135deg,#8f9796,#c4c9c8)}

.dialog{position:absolute;left:342px;top:157px;width:511px;height:362px;border:1px solid #29282b;border-radius:7px;background:linear-gradient(60deg,transparent 0 290px,rgba(160,160,165,.25) 310px,transparent 440px),#ebe9ea;box-shadow:inset 0 0 0 1px #fff,0 3px 8px 2px rgba(0,0,0,.6),0 4px 14px 4px rgba(0,0,0,.45);color:#1a1a1c;font-size:11.800px;padding:0 6px}
.dtitle{height:28px;display:flex;justify-content:space-between;line-height:28px;font-size:11.500px;padding-left:1px}
.close{width:47px;height:19px;display:flex;align-items:center;justify-content:center;border:1px solid #6d2a2a;border-top:0;border-radius:0 0 4px 4px;background:linear-gradient(#eb9a92 0,#dd6a64 48%,#cf2f2d 50%,#e8605c)}
.dbody{width:497px;height:326px;border:1px solid #77757a;background:#e6e3e4;display:flex}
.dleft{width:367px;padding:10px 0 0 11px}
fieldset{margin:0;width:355px;border:1px solid #98969a;box-shadow:1px 1px 0 #fff,inset 1px 1px 0 #fff;padding:0}
legend{margin-left:11px;padding:0 6px;line-height:17px;height:17px;background:#e6e3e4}
.g1{height:69px}
.g2{height:179px;margin-top:7px}
.drow{display:flex;line-height:18px}
.drow label{width:170px;text-align:right;margin-right:8px}
.g1 .drow{height:24px;margin-top:0}
.g1 .drow:first-of-type{padding-top:3px}
.g1 .drow+.drow{padding-top:3px}
.drow.edit{height:30px;padding-top:6px}
.edit label{margin-right:4px}
.inp,.combo{height:20px;line-height:19px;background:#fff;border-top:1px solid #98969a;padding-left:5px}
.inp{width:69px;border-left:1px solid #d0ced0;padding-left:4px}
.combo{width:100px;margin-left:4px;margin-top:-1px;height:22px;padding:0 5px 0 7px;font-size:11.600px;display:flex;align-items:center;justify-content:space-between}
.rel{display:flex;align-items:center;padding-left:145px;height:18px;margin-top:2px;font-size:11.300px}
.rel i{width:13px;height:13px;border:1px solid #88868a;background:linear-gradient(135deg,#ccc,#fff);box-shadow:inset 0 0 0 1px #f4f4f4;margin-right:3px}
.anc{margin-top:6px}
.anc label{margin-top:-2px}
.ext{margin-top:17px}
.ext label{width:171px;margin-right:4px;font-size:11.700px;line-height:20px}
.combo.wide{width:111px;margin:0;padding:0 4px 0 6px}
.chip{width:14px;height:14px;margin:4px 0 0 6px;border:1px solid #77757a;background:#fff}
.dbtns{padding:17px 0 0 18px}
.dbtns span{display:block;width:99px;height:18px;margin-bottom:10px;border:1px solid #77757a;border-radius:3px;text-align:center;line-height:16px;font-size:11.400px;background:linear-gradient(#f2f1f2,#e6e5e6 50%,#cfced0 52%,#d4d3d5);box-shadow:inset 0 0 0 1px #f4f4f4}
.dbtns .ok{border:2px solid #2b8ba2;line-height:15px}
```
